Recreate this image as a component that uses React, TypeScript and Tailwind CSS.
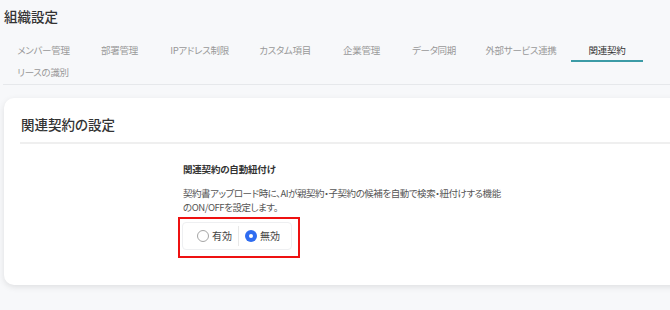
import { useState } from "react";

// widths measured so the tab row wraps where the original does
const TABS = [
  { label: "メンバー管理", w: "w-[81px]" },
  { label: "部署管理", w: "w-[71px]" },
  { label: "IPアドレス制限", w: "w-[89px]" },
  { label: "カスタム項目", w: "w-[82px]" },
  { label: "企業管理", w: "w-[71px]" },
  { label: "データ同期", w: "w-[74px]" },
  { label: "外部サービス連携", w: "w-[100px]" },
  { label: "関連契約", w: "w-[72px]" },
  { label: "リースの識別", w: "w-[80px]" },
];

export default function App() {
  const [active, setActive] = useState("関連契約");
  const [autoLink, setAutoLink] = useState(false);

  return (
    <div className="h-[310px] w-[670px] overflow-hidden bg-[#f7f8fa] text-[#333] [font-family:'Noto_Sans_CJK_JP','Noto_Sans',sans-serif] [font-feature-settings:'palt']">
      {/* Page title */}
      <div className="flex h-[40px] items-start pl-[4px] pt-[10px]">
        <h1 className="text-[13.5px] font-medium leading-none">組織設定</h1>
      </div>

      {/* Tabs */}
      <div className="ml-[3px] flex flex-wrap border-b border-[#e6e8eb]">
        {TABS.map((t) => (
          <button
            key={t.label}
            type="button"
            onClick={() => setActive(t.label)}
            className={
              active === t.label
                ? `flex h-[22px] ${t.w} items-center justify-center border-b-2 border-[#3c9ba6] pt-[2px] text-[9.5px] leading-none tracking-[-0.3px] whitespace-nowrap text-[#333]`
                : `flex h-[22px] ${t.w} items-center justify-center border-b-2 border-transparent pt-[2px] text-[9.5px] leading-none tracking-[-0.3px] whitespace-nowrap text-[#999]`
            }
          >
            {t.label}
          </button>
        ))}
      </div>

      {/* Card */}
      <div className="ml-[4px] mt-[13px] h-[187px] w-[700px] rounded-[10px] bg-white shadow-[0_2px_6px_rgba(0,0,0,0.1)]">
        <div className="ml-[16px] flex h-[46px] items-end border-b-2 border-[#efefef] pb-[11px] pl-[1px]">
          <h2 className="text-[13.5px] font-medium leading-none">関連契約の設定</h2>
        </div>

        <div className="flex pt-[18px]">
          <div className="w-[179px] shrink-0" />
          <div className="flex flex-col">
            <div className="text-[9.5px] font-bold leading-[14px] tracking-[-0.2px] text-[#333]">関連契約の自動紐付け</div>
            <p className="mt-[10px] text-[9.5px] leading-[14px] tracking-[-0.45px] text-[#555]">
              契約書アップロード時に、AIが親契約・子契約の候補を自動で検索・紐付けする機能
              <br />
              のON/OFFを設定します。
            </p>

            {/* highlighted radio group */}
            <div className="ml-[-5px] mt-[3px] w-[122px] border-2 border-[#ee1111] pb-[6px] pl-[2px] pr-[6px] pt-[3px]">
              <div className="flex h-[28px] items-center rounded-[4px] border border-[#eeeff1] pl-[14px]">
                <label className="flex cursor-pointer items-center gap-[3px]" onClick={() => setAutoLink(true)}>
                  <span
                    className={
                      autoLink
                        ? "flex h-[12px] w-[12px] items-center justify-center rounded-full bg-[#2f6cf0]"
                        : "flex h-[12px] w-[12px] items-center justify-center rounded-full border border-[#a5a5a5] bg-white"
                    }
                  >
                    {autoLink && <span className="h-[4px] w-[4px] rounded-full bg-white" />}
                  </span>
                  <span className="text-[10px] leading-none text-[#444]">有効</span>
                </label>
                <span className="mx-[6px] h-[20px] w-px bg-[#e8e8e8]" />
                <label className="flex cursor-pointer items-center gap-[3px]" onClick={() => setAutoLink(false)}>
                  <span
                    className={
                      !autoLink
                        ? "flex h-[12px] w-[12px] items-center justify-center rounded-full bg-[#2f6cf0]"
                        : "flex h-[12px] w-[12px] items-center justify-center rounded-full border border-[#a5a5a5] bg-white"
                    }
                  >
                    {!autoLink && <span className="h-[4px] w-[4px] rounded-full bg-white" />}
                  </span>
                  <span className="text-[10px] leading-none text-[#444]">無効</span>
                </label>
              </div>
            </div>
          </div>
        </div>
      </div>
    </div>
  );
}
